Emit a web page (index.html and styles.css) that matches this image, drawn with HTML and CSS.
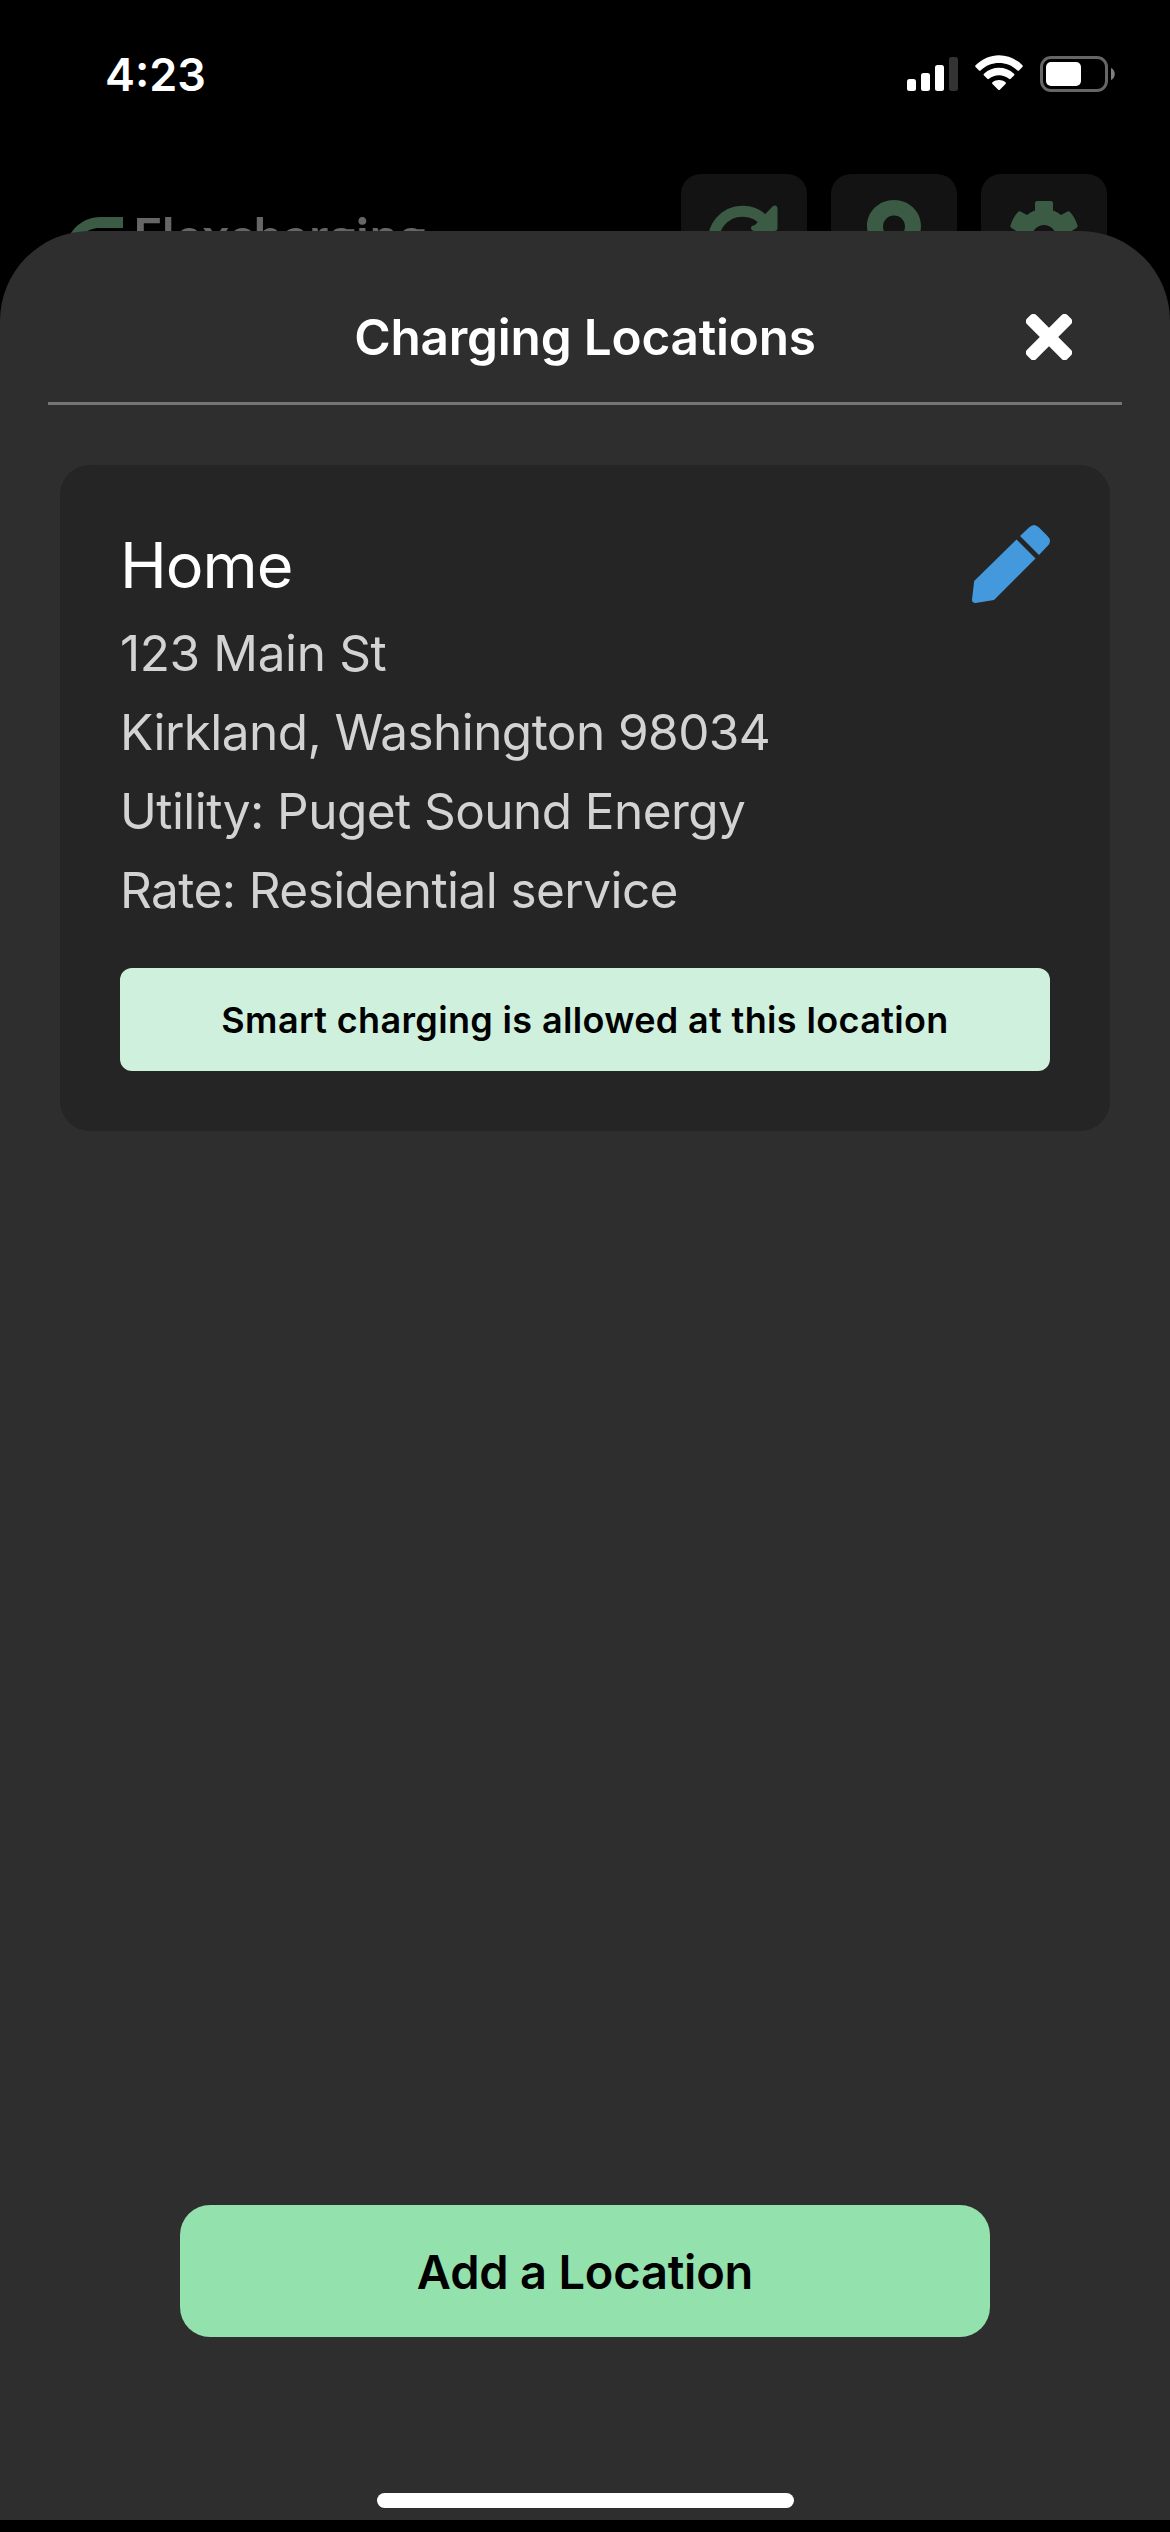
FILE: index.html
```html
<!DOCTYPE html>
<html lang="en">
<head>
<meta charset="utf-8">
<title>Charging Locations</title>
<link rel="stylesheet" href="styles.css">
</head>
<body>
<div class="phone">
  <div class="status-bar">
    <span class="time">4:23</span>
    <div class="status-icons">
      <svg class="signal" width="51" height="34" viewBox="0 0 51 34"><rect x="0" y="22" width="9" height="12" rx="2.5" fill="#fff"/><rect x="14" y="16" width="9" height="18" rx="2.5" fill="#fff"/><rect x="28" y="8" width="9" height="26" rx="2.5" fill="#fff"/><rect x="42" y="0" width="9" height="34" rx="2.5" fill="#333"/></svg>
      <svg class="wifi" width="48" height="36" viewBox="0 0 48 36" fill="#fff"><path d="M.6 10.2C14-3.2 34-3.2 47.4 10.2c.6.6.6 1.2 0 1.8L44 15.4c-.5.5-1 .5-1.6 0C32 5.600 16 5.600 5.600 15.400c-.6.5-1.100.5-1.600 0L.6 12c-.6-.6-.6-1.200 0-1.800Z"/><path d="M9 18.700c8.500-7.900 21.500-7.900 30 0 .6.600.6 1.200 0 1.800l-3.300 3.300c-.6.6-1.100.5-1.700 0-5.700-4.900-14.300-4.900-20 0-.6.5-1.100.6-1.700 0L9 20.500c-.6-.6-.6-1.200 0-1.800Z"/><path d="M17.500 27.200c3.700-3.100 9.300-3.100 13 0 .6.500.6 1.100 0 1.700l-5.700 5.800c-.5.5-1.100.5-1.600 0l-5.700-5.800c-.6-.6-.6-1.200 0-1.700Z"/></svg>
      <svg class="battery" width="75" height="36" viewBox="0 0 75 36"><rect x="1.5" y="1.5" width="65" height="33" rx="9.5" fill="none" stroke="#666" stroke-width="3"/><rect x="6" y="6" width="35" height="24" rx="5" fill="#fff"/><path d="M71 12c5 2 5 10 0 12Z" fill="#808080"/></svg>
    </div>
  </div>
  <div class="app-bar">
    <div class="brand">
      <svg class="brand-mark" width="58" height="60" viewBox="0 0 58 60"><path d="M58 0H36C14 0 0 18 0 36v24h12V36c0-16 10-25 22-25h24Z" fill="#3b5b45"/></svg>
      <span class="brand-name">Flexcharging</span>
    </div>
    <div class="tools">
      <div class="tool"><svg width="72" height="72" viewBox="0 0 72 72"><path d="M58 22A29 29 0 1 0 63 45" fill="none" stroke="#3b5b45" stroke-width="11"/><path d="M47 24 64.500 5.500c2-2 5-1 5 2V27c0 2-1 3-3 3H47c-4 0-5-3-3-5Z" fill="#3b5b45"/></svg></div>
      <div class="tool"><svg width="54" height="74" viewBox="0 0 54 74"><path fill="#3b5b45" fill-rule="evenodd" d="M27 0C12 0 0 11.500 0 26c0 20 27 48 27 48s27-28 27-48C54 11.500 42 0 27 0Zm0 15.500a11 11 0 1 1 0 22 11 11 0 0 1 0-22Z"/></svg></div>
      <div class="tool"><svg width="68" height="72" viewBox="0 0 68 72"><path fill="#3b5b45" fill-rule="evenodd" d="M27 0q7-1 14 0c1 0 2 1 2 2v7.500q5 1.500 8 4.500l6.500-3.500c1-.5 2 0 3 1q4.500 5 7 13c.3 1-.2 2-1 2.500L60 31v10l6.500 4q1.500 1 1 2.500-2.500 8-7 13-1.500 1.500-3 .5L51 57q-3 3-8 5v8q-9 3-18 0v-8q-5-2-8-5l-6.500 4q-1.500 1-3-.5-4.500-5-7-13Q0 46 1.500 45L8 41V31l-6.500-4C.5 26.500 0 25.500.5 24.500q2.500-8 7-13c1-1 2-1.500 3-1L17 14q3-3 8-4.500V2c0-1 1-2 2-2Zm7 24a12 12 0 1 0 0 24 12 12 0 0 0 0-24Z"/></svg></div>
    </div>
  </div>
  <section class="sheet">
    <header class="sheet-header">
      <h1 class="title">Charging Locations</h1>
      <svg class="close" width="46" height="46" viewBox="0 0 46 46" fill="#fff"><rect x="-5.500" y="16.500" width="57" height="13" rx="4" transform="rotate(45 23 23)"/><rect x="-5.500" y="16.500" width="57" height="13" rx="4" transform="rotate(-45 23 23)"/></svg>
    </header>
    <article class="card">
      <div class="card-head">
        <h2 class="name">Home</h2>
        <svg class="edit" width="78" height="78" viewBox="0 0 78 78" fill="#4499dc"><path d="M44.500 14.500 63.500 33.500 22 75 3.500 77.900Q0 78 0 74.500L2.200 56Z"/><path d="M48 11 57 2.500q5-5 10 0l8.500 8.500q5 5 0 10L67 30Z"/></svg>
      </div>
      <p class="line street">123 Main St</p>
      <p class="line">Kirkland, Washington 98034</p>
      <p class="line">Utility: Puget Sound Energy</p>
      <p class="line">Rate: Residential service</p>
      <div class="badge">Smart charging is allowed at this location</div>
    </article>
    <button class="add">Add a Location</button>
    <div class="home-indicator"></div>
  </section>
</div>
</body>
</html>
```
FILE: styles.css
```css
* { box-sizing: border-box; margin: 0; padding: 0; }
body { background: #000; font-family: Inter, "Liberation Sans", sans-serif; color: #fff; }
.phone { position: relative; width: 1170px; height: 2532px; background: #000; overflow: hidden; }

.status-bar { height: 174px; padding: 0 55px 0 105px; display: flex; justify-content: space-between; }
.time { margin-top: 44px; height: 61px; line-height: 61px; font-size: 45px; font-weight: 600; }
.status-icons { display: flex; align-items: flex-start; padding-top: 55px; }
.signal { margin-top: 2px; }
.wifi { margin-left: 17px; }
.battery { margin: 1px 0 0 17px; }

.app-bar { display: flex; justify-content: space-between; padding: 0 63px 0 65px; }
.brand { display: flex; align-items: flex-start; padding-top: 43px; }
.brand-name { margin: -12px 0 0 10px; font-family: Lato, sans-serif; font-size: 50px; line-height: 60px; font-weight: 700; letter-spacing: 1px; color: #666; }
.tools { display: flex; gap: 24px; }
.tool { width: 126px; height: 126px; border-radius: 20px; background: #131313; display: flex; align-items: center; justify-content: center; }

/* modal sheet over the dimmed app */
.sheet { position: absolute; top: 231px; left: 0; right: 0; height: 2289px; border-radius: 90px 90px 0 0; background: #2e2e2e; display: flex; flex-direction: column; align-items: center; }
.sheet-header { width: 1074px; height: 174px; padding: 40px 50px 0; border-bottom: 3px solid #757575; display: grid; grid-template-columns: 46px 1fr 46px; align-items: center; }
.title { grid-column: 2; text-align: center; font-size: 49.5px; font-weight: 600; letter-spacing: -.2px; }

.card { width: 1050px; height: 666px; margin-top: 60px; padding: 60px; border-radius: 30px; background: #252525; }
.card-head { display: flex; justify-content: space-between; height: 80px; margin-bottom: 8.5px; }
.name { font-size: 63px; line-height: 80px; font-weight: 400; letter-spacing: -1px; }
.line { font-size: 49.5px; line-height: 79px; color: #d3d3d3; letter-spacing: -.56px; }
.street { letter-spacing: -.37px; }
.badge { height: 103px; margin-top: 38.5px; border-radius: 12px; background: #d0f0de; color: #000; font-size: 36px; font-weight: 600; letter-spacing: .35px; display: flex; align-items: center; justify-content: center; }

.add { width: 810px; height: 132px; margin-top: auto; border: 0; border-radius: 30px; background: #93e1ac; color: #000; font: 600 47px Inter, "Liberation Sans", sans-serif; letter-spacing: -.2px; }
.home-indicator { width: 417px; height: 15px; margin: 156px 0 12px; border-radius: 8px; background: #fff; }
```
